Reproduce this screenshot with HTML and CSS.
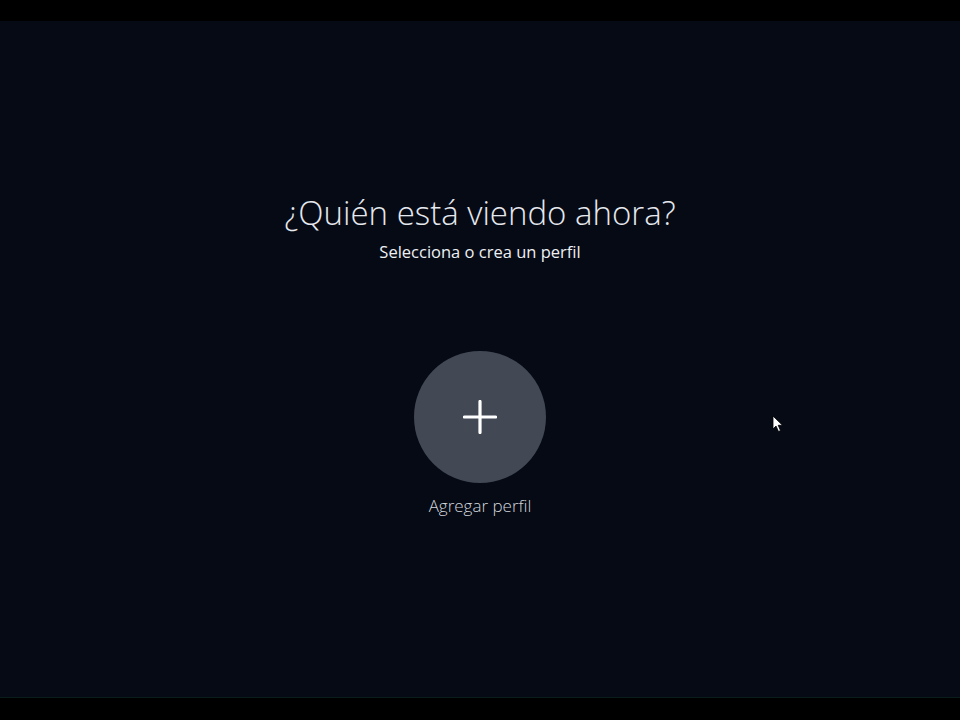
FILE: index.html
```html
<!DOCTYPE html>
<html lang="es">
<head>
<meta charset="utf-8">
<title>¿Quién está viendo ahora?</title>
<link rel="stylesheet" href="styles.css">
</head>
<body>
<div class="frame">
  <main class="screen">
    <header class="heading">
      <h1 class="title">¿Quién está viendo ahora?</h1>
      <p class="subtitle">Selecciona o crea un perfil</p>
    </header>
    <section class="profiles">
      <button class="profile add">
        <span class="avatar">
          <svg width="34" height="34" viewBox="0 0 34 34" aria-hidden="true">
            <path d="M17 1.5V32.5M1.5 17H32.5" stroke="#ffffff" stroke-width="3.2" stroke-linecap="round"/>
          </svg>
        </span>
        <span class="label">Agregar perfil</span>
      </button>
    </section>
    <svg class="cursor" width="12" height="18" viewBox="0 0 12 18" aria-hidden="true">
      <path d="M1 1V14L4 11L6.5 16.5L8.5 15.6L6.2 10.3H10.5Z" fill="#ffffff" stroke="#000000" stroke-width="0.8"/>
    </svg>
  </main>
</div>
</body>
</html>
```
FILE: styles.css
```css
html, body {
  margin: 0;
  padding: 0;
  background: #000000;
}
body {
  width: 960px;
  height: 720px;
  overflow: hidden;
  font-family: "Open Sans", "Noto Sans", sans-serif;
}
.frame {
  padding-top: 21px;
  height: 720px;
  box-sizing: border-box;
}
.screen {
  position: relative;
  height: 676px;
  background: #050a15;
  border-bottom: 1px solid #0b1d1a;
  display: flex;
  flex-direction: column;
  align-items: center;
}
.heading {
  margin-top: 169px;
  text-align: center;
}
.title {
  margin: 0;
  font-weight: 300;
  font-size: 33px;
  line-height: 46px;
  color: #e6e8ee;
  letter-spacing: 0;
}
.subtitle {
  margin: 5px 0 0;
  font-weight: 400;
  font-size: 16.5px;
  line-height: 22px;
  color: #eef0f4;
}
.profiles {
  margin-top: 88px;
  display: flex;
  justify-content: center;
}
.profile {
  background: none;
  border: 0;
  padding: 0;
  display: flex;
  flex-direction: column;
  align-items: center;
  cursor: pointer;
  font-family: inherit;
}
.avatar {
  width: 132px;
  height: 132px;
  border-radius: 50%;
  background: #424955;
  display: flex;
  align-items: center;
  justify-content: center;
}
.label {
  margin-top: 12px;
  font-weight: 300;
  font-size: 17px;
  line-height: 22px;
  color: #d3d6dc;
}
.cursor {
  position: absolute;
  left: 772px;
  top: 394px;
}
```
